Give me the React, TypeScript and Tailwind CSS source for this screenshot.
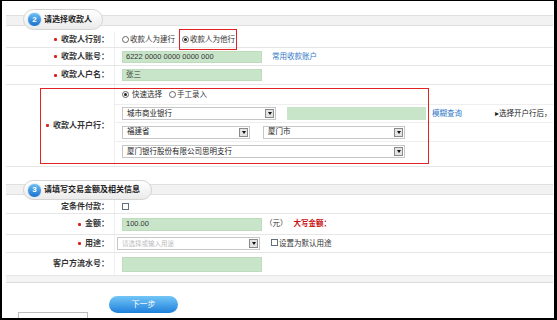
import React from "react";

function Radio({ checked }: { checked?: boolean }) {
  return (
    <span className="inline-flex h-[7px] w-[7px] shrink-0 items-center justify-center rounded-full border border-[#666] bg-white">
      {checked && <span className="h-[3px] w-[3px] rounded-full bg-[#222]" />}
    </span>
  );
}

function Check() {
  return <span className="inline-block h-[7px] w-[7px] shrink-0 border border-[#5f6f80] bg-white" />;
}

function Arrow() {
  return (
    <span className="flex h-[9px] w-[9px] shrink-0 items-center justify-center border border-[#8a8a8a] bg-[#e4e4e4]">
      <span className="h-0 w-0 border-x-[2px] border-t-[3px] border-x-transparent border-t-[#111]" />
    </span>
  );
}

function Select({ w, text, placeholder }: { w: string; text: string; placeholder?: boolean }) {
  return (
    <div className={`flex h-[13px] shrink-0 items-center justify-between border border-[#c6c6c6] bg-white pl-[4px] pr-[1px] ${w}`}>
      <span className={placeholder ? "whitespace-nowrap text-[6.5px] text-[#bdbdbd]" : "whitespace-nowrap text-[7.5px] text-[#222]"}>{text}</span>
      <Arrow />
    </div>
  );
}

function Green({ text, h }: { text?: string; h: string }) {
  return (
    <div className={`flex w-[140px] shrink-0 items-center border border-[#bcdcbc] bg-[#c9e5c9] pl-[3px] text-[7.5px] text-[#333] ${h}`}>
      {text}
    </div>
  );
}

function Label({ text, req }: { text: string; req?: boolean }) {
  return (
    <div className="flex w-[109px] shrink-0 items-center justify-end self-stretch border-r border-[#efefef] pr-[5px] text-[8px] font-bold text-[#333]">
      {req && <span className="mr-[4px] h-[3px] w-[3px] rounded-[1px] bg-[#e02020]" />}
      <span className="whitespace-nowrap">{text}</span>
    </div>
  );
}

function Header({ h, bandTop, tabTop, tabH, tabW, num, title }: { h: string; bandTop: string; tabTop: string; tabH: string; tabW: string; num: string; title: string }) {
  return (
    <div className={`relative ${h}`}>
      <div className={`absolute left-0 right-0 h-[11px] border-y border-[#e0e0e0] bg-[#f2f2f2] ${bandTop}`} />
      <div className={`absolute left-[17px] flex items-center rounded-full border border-[#d4d4d4] bg-gradient-to-b from-white to-[#ebebeb] pl-[3px] ${tabTop} ${tabH} ${tabW}`}>
        <span className="flex h-[15px] w-[15px] items-center justify-center rounded-full border border-[#dfeefa] bg-gradient-to-b from-[#6cc0f4] to-[#1670cc] text-[8px] font-bold text-white">
          {num}
        </span>
        <span className="ml-[2px] whitespace-nowrap text-[8px] font-bold text-[#222]">{title}</span>
      </div>
    </div>
  );
}

export default function App() {
  return (
    <div className="h-[320px] w-[557px] overflow-hidden bg-black pb-[2px] pl-[2px] pr-[3px] pt-[1px] font-['Liberation_Sans','Noto_Sans_CJK_SC',sans-serif]">
      <div className="h-full w-full overflow-hidden bg-white pl-[4px] pr-[1px]">
        <Header h="h-[31px]" bandTop="top-[14px]" tabTop="top-[8px]" tabH="h-[21px]" tabW="w-[80px]" num="2" title="请选择收款人" />

        <div className="flex h-[16px] border-b border-[#e6e6e6]">
          <Label text="收款人行别：" req />
          <div className="flex flex-1 items-center pl-[7px] text-[7.5px] text-[#333]">
            <Radio />
            <span className="ml-[1px] whitespace-nowrap">收款人为建行</span>
            <div className="ml-[4px] flex h-[21px] w-[58px] shrink-0 items-center border-[1.5px] border-[#e02424] pl-[2px]">
              <Radio checked />
              <span className="ml-[1px] whitespace-nowrap">收款人为他行</span>
            </div>
          </div>
        </div>

        <div className="flex h-[18px] border-b border-[#e6e6e6]">
          <Label text="收款人账号：" req />
          <div className="flex flex-1 items-center pl-[7px]">
            <Green h="h-[12px]" text="6222 0000 0000 0000 000" />
            <span className="ml-[10px] whitespace-nowrap text-[7.5px] text-[#2f78c8]">常用收款账户</span>
          </div>
        </div>

        <div className="flex h-[19px] border-b border-[#e6e6e6]">
          <Label text="收款人户名：" req />
          <div className="flex flex-1 items-center pl-[7px]">
            <Green h="h-[12px]" text="张三" />
          </div>
        </div>

        <div className="relative flex h-[82px] border-b border-[#e6e6e6]">
          <Label text="收款人开户行：" req />
          <div className="flex flex-1 flex-col overflow-hidden text-[7.5px] text-[#333]">
            <div className="flex h-[20px] shrink-0 items-center border-b border-[#eeeeee] pl-[7px]">
              <Radio checked />
              <span className="ml-[3px] w-[37px] whitespace-nowrap">快速选择</span>
              <Radio />
              <span className="ml-[1px] whitespace-nowrap">手工录入</span>
            </div>
            <div className="flex h-[18px] shrink-0 items-center border-b border-[#eeeeee] pl-[7px]">
              <Select w="w-[154px]" text="城市商业银行" />
              <div className="ml-[11px] h-[13px] w-[139px] shrink-0 bg-[#c9e5c9]" />
              <span className="ml-[6px] shrink-0 whitespace-nowrap text-[#2f78c8]">模糊查询</span>
              <span className="ml-[33px] shrink-0 whitespace-nowrap text-[#222]">▸选择开户行后，</span>
            </div>
            <div className="flex h-[19px] shrink-0 items-center border-b border-[#eeeeee] pl-[7px]">
              <Select w="w-[128px]" text="福建省" />
              <div className="ml-[13px]">
                <Select w="w-[142px]" text="厦门市" />
              </div>
            </div>
            <div className="flex h-[24px] shrink-0 items-start pl-[7px] pt-[3px]">
              <Select w="w-[283px]" text="厦门银行股份有限公司思明支行" />
            </div>
          </div>
          <div className="pointer-events-none absolute left-[34px] top-[3px] h-[76px] w-[389px] border-[1.5px] border-[#e02424]" />
        </div>

        <Header h="h-[33px]" bandTop="top-[17px]" tabTop="top-[13px]" tabH="h-[20px]" tabW="w-[129px]" num="3" title="请填写交易金额及相关信息" />

        <div className="flex h-[14px] border-b border-[#e6e6e6]">
          <Label text="定条件付款：" />
          <div className="flex flex-1 items-center pl-[7px]">
            <Check />
          </div>
        </div>

        <div className="flex h-[21px] border-b border-[#e6e6e6]">
          <Label text="金额：" req />
          <div className="flex flex-1 items-center pl-[7px] text-[7.5px]">
            <Green h="h-[13px]" text="100.00" />
            <span className="ml-[3px] whitespace-nowrap text-[#333]">（元）</span>
            <span className="ml-[6px] whitespace-nowrap font-bold text-[#c81010]">大写金额：</span>
          </div>
        </div>

        <div className="flex h-[18px] border-b border-[#e6e6e6]">
          <Label text="用途：" req />
          <div className="flex flex-1 items-center pl-[2px] text-[7.5px]">
            <Select w="w-[143px]" text="请选择或输入用途" placeholder />
            <span className="ml-[11px]">
              <Check />
            </span>
            <span className="ml-[1px] whitespace-nowrap text-[#333]">设置为默认用途</span>
          </div>
        </div>

        <div className="flex h-[23px] border-b border-[#e6e6e6]">
          <Label text="客户方流水号：" />
          <div className="flex flex-1 items-center pl-[7px]">
            <Green h="h-[15px]" />
          </div>
        </div>

        <div className="h-[7px] border-b border-[#dcdcdc] bg-[#f4f4f4]" />

        <div className="mt-[13px] flex items-start pl-[12px]">
          <div className="mt-[16px] h-[12px] w-[70px] border border-[#bdbdbd] bg-white" />
          <div className="ml-[21px] flex h-[17px] w-[69px] items-center justify-center rounded-full bg-gradient-to-b from-[#72c6f6] to-[#1a80dc] text-[8px] text-white">
            下一步
          </div>
        </div>
      </div>
    </div>
  );
}
